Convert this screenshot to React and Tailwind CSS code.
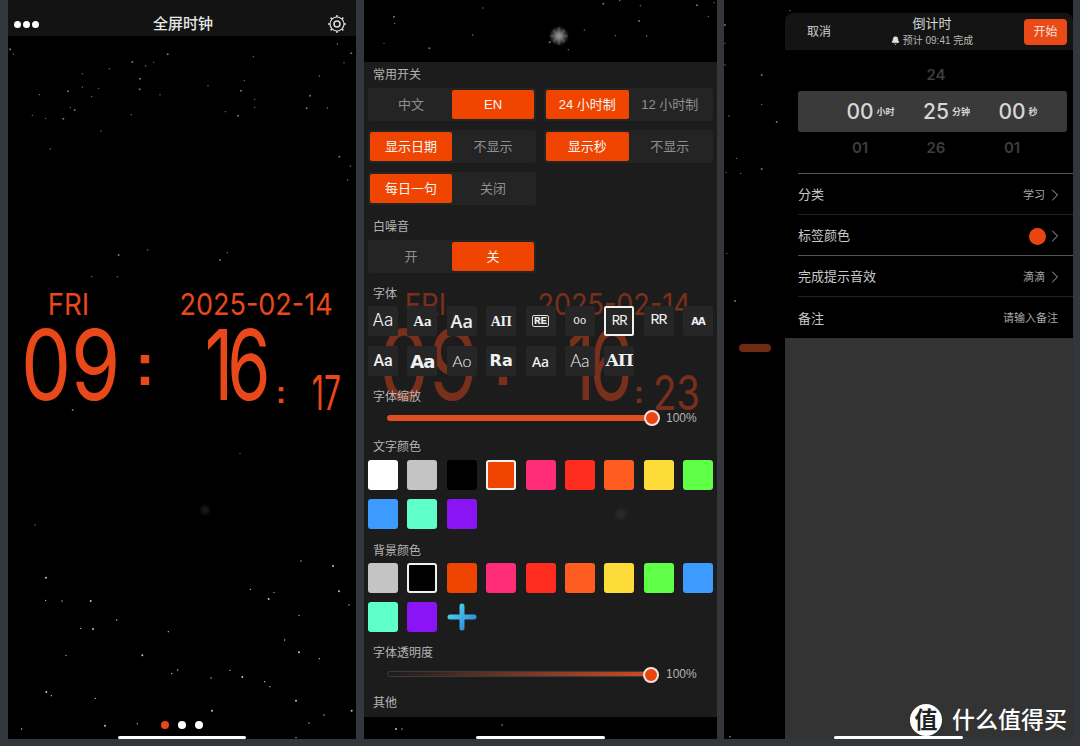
import { Bell, ChevronRight } from "lucide-react";

const CJK = "[font-family:'Liberation_Sans','Noto_Sans_CJK_SC',sans-serif]";

// star positions read at 3x, converted when drawn
const stars1 = [
  [30,148],[40,162],[1012,132],[1054,160],[1032,188],[760,170],[503,163],[461,187],[437,198],[397,186],[328,206],[247,221],
  [420,236],[958,228],[733,242],[723,272],[247,261],[296,265],[204,274],[118,284],[480,284],[419,268],[275,290],[624,257],
  [930,287],[764,298],[764,322],[920,325],[982,324],[211,322],[224,330],[97,346],[137,355],[190,356],[394,344],[676,335],
  [714,347],[303,393],[151,447],[1018,470],[1051,498],[1043,540],[356,765],[443,750],[682,758],[660,780],[275,830],[352,830],
  [218,1230],[720,1360],[105,1575],[138,1733],[137,1801],[186,1803],[272,1803],[350,1860],[242,1885],[279,1887],[505,1895],
  [198,1966],[427,1966],[533,2010],[515,2021],[139,2076],[154,2087],[286,2095],[315,2177],[412,2171],[65,2187],[636,2132],
  [633,2034],[690,2011],[727,2031],[794,2045],[810,2060],[888,2102],[972,2145],[927,2169],[1055,2132],[888,2213],[958,1976],
  [897,1957],[854,1920],[897,1846],[1017,1774],[1047,1815],[822,1777],[806,1797],[751,1768],[903,1683],[999,1698],
];
const stars2 = [
  [1182,50],[1184,70],[1152,130],[1288,145],[1418,105],[1449,24],[1810,11],[1859,2],[1921,17],[1917,63],[1846,107],[1940,108],
  [2091,16],[2142,8],[2125,50],[1649,127],[1705,149],[1753,90],[1188,2187],[1206,2187],[1506,2175],
];
const stars3 = [
  [2175,75],[2175,130],[2175,195],[2285,225],[2285,313],[2187,348],[2330,366],[2210,475],[2222,520],[2285,507],[2178,517],
  [2180,760],[2205,903],[2370,32],[2190,2210],
];

function Stars({ list, left, width }) {
  return (
    <svg className="absolute inset-0" width={width} height={739} viewBox={`${left} 0 ${width} 739`}>
      {list.map(([x, y], i) => (
        <circle key={i} cx={x / 3} cy={y / 3} r={i % 3 === 0 ? 1 : 0.7} fill="#d8d8d8" opacity={y > 1600 ? 0.9 : 0.55} />
      ))}
    </svg>
  );
}

function Led({ box, scale, className, children }) {
  return (
    <div className={`flex shrink-0 items-center justify-center whitespace-nowrap ${box}`}>
      <span className={`inline-block ${scale} ${className}`}>{children}</span>
    </div>
  );
}

function Burst({ id, className, size, core, ray }) {
  return (
    <svg className={`absolute ${className}`} width={size} height={size} viewBox="0 0 22 22">
      <defs>
        <radialGradient id={id}>
          <stop offset="0" stopColor={core} />
          <stop offset="1" stopColor={core} stopOpacity="0" />
        </radialGradient>
      </defs>
      <circle cx="11" cy="11" r="10" fill={`url(#${id})`} />
      <path d="M11 2v18M2 11h18M5 5l12 12M17 5L5 17" stroke={ray} strokeWidth="0.5" />
    </svg>
  );
}

function ClockPanel() {
  return (
    <div className="relative h-[739px] w-[348px] shrink-0 bg-black">
      <Stars list={stars1} left={8} width={348} />
      <Burst id="burst1" className="left-[190px] top-[503px]" size={14} core="#1f1f1f" ray="#141414" />
      <div className="relative flex h-[36px] items-end justify-between bg-[#131313] pb-[2px] pl-[6px] pr-[9px]">
        <div className="mb-[6px] flex gap-[2px]">
          <span className="h-[7px] w-[7px] rounded-full bg-white" />
          <span className="h-[7px] w-[7px] rounded-full bg-white" />
          <span className="h-[7px] w-[7px] rounded-full bg-white" />
        </div>
        <span className={`text-[15px] font-medium leading-5 text-[#e8e8e8] ${CJK}`}>全屏时钟</span>
        <svg width="20" height="20" viewBox="0 0 20 20" fill="none" stroke="#dddddd">
          <circle cx="10" cy="10" r="3" strokeWidth="1.5" />
          <circle cx="10" cy="10" r="7" strokeWidth="1.2" />
          <path d="M10 1v2M10 17v2M1 10h2M17 10h2M3.6 3.6L5 5M15 15l1.4 1.4M16.4 3.6L15 5M5 15l-1.4 1.4" strokeWidth="1.5" />
        </svg>
      </div>
      <div className="relative pt-[257px] text-[#e8481a] [font-family:'Inter',sans-serif]">
        <div className="flex h-[22px] pl-[41px]">
          <Led box="h-[22px] w-[40px]" scale="scale-x-[0.92]" className="text-[30px] leading-[22px]">FRI</Led>
          <Led box="ml-[91px] h-[22px] w-[152px]" scale="scale-x-[0.9]" className="text-[30px] leading-[22px]">2025-02-14</Led>
        </div>
        <div className="mt-[14px] flex h-[71px] items-start pl-[17px]">
          <Led box="h-[71px] w-[92px]" scale="scale-x-[0.82]" className="text-[97px] leading-[71px]">09</Led>
          <Led box="ml-[22px] h-[71px] w-[12px]" scale="" className="text-[60px] font-bold leading-[71px] [font-family:'Liberation_Sans',sans-serif]">:</Led>
          <Led box="ml-[54px] h-[71px] w-[60px]" scale="scale-x-[0.72]" className="text-[97px] leading-[71px] tracking-[-8px]">16</Led>
          <Led box="ml-[10px] mt-[46px] h-[35px] w-[12px]" scale="" className="text-[31px] font-bold leading-[35px] [font-family:'Liberation_Sans',sans-serif]">:</Led>
          <Led box="ml-[24px] mt-[46px] h-[35px] w-[30px]" scale="scale-x-[0.62]" className="text-[48px] leading-[35px]">17</Led>
        </div>
      </div>
      <div className="absolute bottom-[10px] left-[153px] flex gap-[9px]">
        <span className="h-[8px] w-[8px] rounded-full bg-[#e8481a]" />
        <span className="h-[8px] w-[8px] rounded-full bg-white" />
        <span className="h-[8px] w-[8px] rounded-full bg-white" />
      </div>
      <div className="absolute bottom-0 left-[110px] h-[3px] w-[128px] rounded-full bg-white" />
    </div>
  );
}

function Label({ className, children }) {
  return <div className={`h-[14px] pl-[5px] text-xs leading-[14px] text-[#b4b4b4] ${className}`}>{children}</div>;
}

function Toggle({ left, right, on }) {
  const active = "rounded-[2px] bg-[#f04500] text-[#f5f5f5]";
  const idle = "text-[#8f8f8f]";
  return (
    <div className="grid h-full grid-cols-2 rounded-[3px] bg-[#242424] p-[2px] text-[13px]">
      <div className={`flex items-center justify-center ${on === 0 ? active : idle}`}>{left}</div>
      <div className={`flex items-center justify-center ${on === 1 ? active : idle}`}>{right}</div>
    </div>
  );
}

const fontRow = [
  { t: "Aa", c: "text-[17px] [font-family:'Inter',sans-serif] font-light" },
  { t: "Aa", c: "text-[15px] [font-family:'Liberation_Serif',serif] font-bold" },
  { t: "Aa", c: "text-[18px] [font-family:'Open_Sans',sans-serif] font-semibold" },
  { t: "AΠ", c: "text-[14px] [font-family:'Liberation_Serif',serif] font-bold" },
  { t: "RE", c: "text-[11px] [font-family:'Liberation_Mono',monospace] font-bold border border-[#dddddd] rounded-[2px] px-[1px] leading-[10px]" },
  { t: "Oo", c: "text-[11px] [font-family:'Liberation_Mono',monospace]" },
  { t: "RR", c: "text-[14px] [font-family:'Liberation_Mono',monospace] tracking-[-1px]", selected: true },
  { t: "RR", c: "text-[15px] [font-family:'Liberation_Mono',monospace] tracking-[-1px]" },
  { t: "AA", c: "text-[10px] [font-family:'DejaVu_Sans',sans-serif] font-bold tracking-[-1px]" },
  { t: "Aa", c: "text-[16px] [font-family:'Roboto',sans-serif] font-medium" },
  { t: "Aa", c: "text-[18px] [font-family:'DejaVu_Sans',sans-serif] font-bold tracking-[-1px]" },
  { t: "Ao", c: "text-[16px] [font-family:'Lato',sans-serif] font-light" },
  { t: "Ra", c: "text-[16px] [font-family:'DejaVu_Sans',sans-serif] font-bold" },
  { t: "Aa", c: "text-[14px] [font-family:'Noto_Sans',sans-serif] font-medium" },
  { t: "Aa", c: "text-[17px] [font-family:'Lato',sans-serif] font-light" },
  { t: "AΠ", c: "text-[17px] [font-family:'DejaVu_Serif',serif] font-bold tracking-[-1px]" },
];

const textColors = ["#ffffff", "#c4c4c4", "#000000", "#ee4400", "#ff2d78", "#ff2d20", "#ff5c22", "#fddc3a", "#5eff46", "#3d9bff", "#5effc8", "#8a14f5"];
const backColors = ["#c4c4c4", "#000000", "#ee4400", "#ff2d78", "#ff2d20", "#ff5c22", "#fddc3a", "#5eff46", "#3d9bff", "#5effc8", "#8a14f5"];

function Swatches({ colors, selected, children }) {
  return (
    <div className="grid grid-cols-[repeat(9,30px)] justify-between gap-y-[9px]">
      {colors.map((c, i) => (
        <span
          key={i}
          style={{ backgroundColor: c }}
          className={`h-[30px] w-[30px] rounded-[3px] ${i === selected ? "border-2 border-[#f0f0f0]" : ""}`}
        />
      ))}
      {children}
    </div>
  );
}

function Slider({ track }) {
  return (
    <div className="flex h-[16px] items-center pl-[19px] [font-family:'Liberation_Sans',sans-serif]">
      <div className={`relative h-[6px] w-[265px] rounded-full ${track}`}>
        <span className="absolute right-[-8px] top-[-5px] h-[16px] w-[16px] rounded-full border-2 border-[#f4e4dc] bg-[#ea4410]" />
      </div>
      <span className="ml-[14px] text-xs text-[#b4b4b4]">100%</span>
    </div>
  );
}

function SettingsPanel() {
  return (
    <div className="relative h-[739px] w-[353px] shrink-0 bg-black">
      <Stars list={stars2} left={364} width={353} />
      <Burst id="burst2" className="left-[184px] top-[25px]" size={22} core="#a8a8a8" ray="#8a8a8a" />
      <div className="relative mt-[62px] h-[655px] bg-[#1c1c1c] px-[4px] pt-[6px]">
        {/* dimmed clock behind the settings */}
        <div className="absolute inset-0 text-[#e8481a] opacity-45 [font-family:'Inter',sans-serif]">
          <div className="flex pl-[42px] pt-[231px]">
            <Led box="h-[22px] w-[40px]" scale="scale-x-[0.92]" className="text-[30px] leading-[22px]">FRI</Led>
            <Led box="ml-[92px] h-[22px] w-[152px]" scale="scale-x-[0.9]" className="text-[30px] leading-[22px]">2025-02-14</Led>
          </div>
          <div className="mt-[14px] flex pl-[19px]">
            <Led box="h-[71px] w-[92px]" scale="scale-x-[0.82]" className="text-[97px] leading-[71px]">09</Led>
            <Led box="ml-[22px] h-[71px] w-[12px]" scale="" className="text-[60px] font-bold leading-[71px] [font-family:'Liberation_Sans',sans-serif]">:</Led>
            <Led box="ml-[58px] h-[71px] w-[60px]" scale="scale-x-[0.72]" className="text-[97px] leading-[71px] tracking-[-8px]">16</Led>
            <Led box="ml-[6px] mt-[46px] h-[35px] w-[12px]" scale="" className="text-[31px] font-bold leading-[35px] [font-family:'Liberation_Sans',sans-serif]">:</Led>
            <Led box="ml-[8px] mt-[46px] h-[35px] w-[47px]" scale="scale-x-[0.8]" className="text-[48px] leading-[35px]">23</Led>
          </div>
        </div>
        <Burst id="burst3" className="left-[249px] top-[444px]" size={16} core="#303030" ray="#282828" />

        <div className={`relative ${CJK}`}>
          <Label>常用开关</Label>
          <div className="mt-[6px] grid grid-cols-[168px_169px] justify-between gap-y-[9px] [&>div]:h-[33px]">
            <div><Toggle left="中文" right="EN" on={1} /></div>
            <div><Toggle left="24 小时制" right="12 小时制" on={0} /></div>
            <div><Toggle left="显示日期" right="不显示" on={0} /></div>
            <div><Toggle left="显示秒" right="不显示" on={0} /></div>
            <div><Toggle left="每日一句" right="关闭" on={0} /></div>
          </div>

          <Label className="mt-[15px]">白噪音</Label>
          <div className="mt-[6px] h-[33px] w-[168px]">
            <Toggle left="开" right="关" on={1} />
          </div>

          <Label className="mt-[14px]">字体</Label>
          <div className="mt-[5px] grid grid-cols-[repeat(9,30px)] justify-between gap-y-[10px]">
            {fontRow.map((f, i) => (
              <div
                key={i}
                className={`flex h-[30px] w-[30px] items-center justify-center rounded-[2px] bg-[#262626] text-[#f0f0f0] ${f.selected ? "border-2 border-[#f0f0f0]" : ""}`}
              >
                <span className={f.c}>{f.t}</span>
              </div>
            ))}
          </div>

          <Label className="mt-[14px]">字体缩放</Label>
          <div className="mt-[6px]">
            <Slider track="bg-[#e0501f]" />
          </div>

          <Label className="mt-[14px]">文字颜色</Label>
          <div className="mt-[6px]">
            <Swatches colors={textColors} selected={3} />
          </div>

          <Label className="mt-[15px]">背景颜色</Label>
          <div className="mt-[5px]">
            <Swatches colors={backColors} selected={1}>
              <svg width="30" height="30" viewBox="0 0 30 30">
                <defs>
                  <linearGradient id="plus" x1="0" y1="0" x2="1" y2="1">
                    <stop offset="0" stopColor="#52d8f0" />
                    <stop offset="1" stopColor="#2f7fd8" />
                  </linearGradient>
                </defs>
                <path d="M15 4v22M3 15h24" stroke="url(#plus)" strokeWidth="5" strokeLinecap="round" />
              </svg>
            </Swatches>
          </div>

          <Label className="mt-[14px]">字体透明度</Label>
          <div className="mt-[6px]">
            <Slider track="border border-[#3a3a3a] bg-gradient-to-r from-[#1c1c1c] to-[#d24a1e]" />
          </div>

          <Label className="mt-[14px]">其他</Label>
        </div>
      </div>
      <div className="absolute bottom-0 left-[112px] h-[3px] w-[129px] rounded-full bg-white" />
    </div>
  );
}

function PickerColumn({ top, value, unit, bottom }) {
  return (
    <div className="flex flex-col items-center [font-family:'Inter','Noto_Sans_CJK_SC',sans-serif]">
      <span className="h-[41px] text-[15px] font-semibold leading-[50px] text-[#3d3d3d]">{top}</span>
      <div className="relative flex h-[41px] items-center text-[#d6d6d6]">
        <span className="text-[21px] font-medium">{value}</span>
        <span className="absolute left-[calc(100%+3px)] top-[14px] whitespace-nowrap text-[9px] font-semibold leading-[14px]">{unit}</span>
      </div>
      <span className="h-[41px] text-[15px] font-semibold leading-[32px] text-[#3d3d3d]">{bottom}</span>
    </div>
  );
}

function SheetRow({ label, right, className, noChevron }) {
  return (
    <div className={`ml-[13px] flex h-[41px] items-center justify-between border-t pt-[2px] ${noChevron ? "pr-[15px]" : "pr-[8px]"} ${className}`}>
      <span className="text-[13px] text-[#c8c8c8]">{label}</span>
      <div className="flex items-center text-[11px] text-[#a8a8a8]">
        {right}
        {!noChevron && <ChevronRight size={20} strokeWidth={1} className="text-[#cccccc]" />}
      </div>
    </div>
  );
}

function TimerPanel() {
  return (
    <div className="relative flex h-[739px] w-[349px] shrink-0 bg-black">
      <Stars list={stars3} left={724} width={349} />
      <div className="relative flex w-[61px] shrink-0 flex-col items-center pt-[344px]">
        <span className="h-[8px] w-[32px] rounded-full bg-[#6e2a12]" />
      </div>
      <div className={`relative flex w-[288px] flex-col pt-[13px] ${CJK}`}>
        <div className="flex h-[37px] items-center justify-between rounded-t-lg bg-[#141414] pl-[22px] pr-[6px]">
          <span className="text-xs text-[#cfcfcf]">取消</span>
          <div className="ml-[9px] flex flex-col items-center">
            <span className="text-[13px] leading-[18px] text-[#d8d8d8]">倒计时</span>
            <span className="flex items-center gap-[3px] text-[10px] leading-[16px] text-[#b8b8b8]">
              <Bell size={9} fill="#e0e0e0" className="text-[#e0e0e0]" />
              预计 09:41 完成
            </span>
          </div>
          <span className="flex h-[26px] w-[43px] items-center justify-center rounded-[4px] bg-[#ea4a18] text-xs text-[#f3e3da]">开始</span>
        </div>
        <div className="relative h-[123px]">
          <div className="absolute left-[13px] top-[41px] h-[41px] w-[269px] rounded-[3px] bg-[#3a3a3a]" />
          <div className="relative grid grid-cols-[76px_76px_76px] pl-[37px]">
            <PickerColumn top="" value="00" unit="小时" bottom="01" />
            <PickerColumn top="24" value="25" unit="分钟" bottom="26" />
            <PickerColumn top="" value="00" unit="秒" bottom="01" />
          </div>
        </div>
        <SheetRow label="分类" right="学习" className="border-[#555555]" />
        <SheetRow
          label="标签颜色"
          right={<span className="mr-[-1px] h-[17px] w-[17px] rounded-full bg-[#ea4410]" />}
          className="border-[#222222]"
        />
        <SheetRow label="完成提示音效" right="滴滴" className="border-[#555555]" />
        <SheetRow label="备注" right="请输入备注" className="h-[42px] border-[#222222]" noChevron />
        <div className="relative flex-1 bg-[#333333]" />
      </div>
      <div className={`absolute bottom-[3px] right-[6px] flex items-center gap-[10px] ${CJK}`}>
        <span className="flex h-[32px] w-[32px] items-center justify-center rounded-full bg-white text-[23px] font-bold leading-none text-[#222222]">值</span>
        <span className="text-[23px] font-medium leading-[32px] text-white">什么值得买</span>
      </div>
      <div className="absolute bottom-0 left-[110px] h-[3px] w-[129px] rounded-full bg-white" />
    </div>
  );
}

export default function App() {
  return (
    <div className="h-[746px] w-[1080px] overflow-hidden bg-[#33373b]">
      <div className="flex gap-[8px] pl-[8px]">
        <ClockPanel />
        <SettingsPanel />
        <div className="-ml-[1px]">
          <TimerPanel />
        </div>
      </div>
    </div>
  );
}
